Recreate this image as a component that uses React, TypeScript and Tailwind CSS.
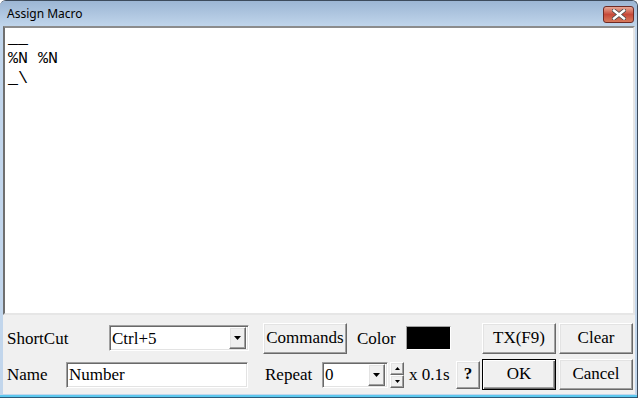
import React from "react";

const serif = "font-['Liberation_Serif','Times_New_Roman',serif]";
const raised =
  "bg-[#f0f0f0] border border-t-white border-l-white border-b-[#696969] border-r-[#696969] shadow-[inset_-1px_-1px_0_#a0a0a0,inset_1px_1px_0_#e3e3e3]";
const sunken =
  "bg-white border border-t-[#a0a0a0] border-l-[#a0a0a0] border-b-white border-r-white shadow-[inset_1px_1px_0_#696969,inset_-1px_-1px_0_#e3e3e3]";

function DownArrow() {
  return (
    <svg width="7" height="4" viewBox="0 0 7 4">
      <polygon points="0,0 7,0 3.5,4" fill="#000" />
    </svg>
  );
}

function DropBtn() {
  return (
    <div className={`${raised} w-[17px] h-[22px] shrink-0 flex items-center justify-center`}>
      <DownArrow />
    </div>
  );
}

function Combo({ w, text }: { w: string; text: string }) {
  return (
    <div className={`${sunken} ${w} h-[26px] shrink-0 flex items-center justify-between pl-[2px] pr-[2px]`}>
      <span className="text-[17px] leading-none text-black">{text}</span>
      <DropBtn />
    </div>
  );
}

function Button({ w, h, children, def }: { w: string; h: string; children: React.ReactNode; def?: boolean }) {
  const cls = def
    ? "bg-[#f0f0f0] border border-black shadow-[inset_1px_1px_0_#fff,inset_-1px_-1px_0_#696969,inset_-2px_-2px_0_#a0a0a0]"
    : raised;
  return (
    <div className={`${cls} ${w} ${h} shrink-0 flex items-center justify-center pb-[2px] text-[17px] leading-none text-black`}>
      {children}
    </div>
  );
}

export default function App() {
  return (
    <div className="w-[638px] h-[398px] bg-[#c2d6ec] flex flex-col border-t border-r border-[#3d4b5c] rounded-tr-[6px] rounded-tl-[6px] overflow-hidden">
      {/* title bar */}
      <div className="h-[25px] bg-gradient-to-b from-[#9cb6d4] to-[#c0d5eb] flex items-center justify-between pl-[7px] pr-[3px]">
        <span className="font-['Noto_Sans','Open_Sans',sans-serif] text-[12px] text-black leading-none">Assign Macro</span>
        <div className="w-[31px] h-[17px] mt-[1px] rounded-[3px] border border-[#6e2b25] bg-gradient-to-b from-[#e6a796] via-[#c6493a] to-[#d77a5c] flex items-center justify-center">
          <svg width="14" height="11" viewBox="0 0 14 11">
            <path d="M2 1.5 L12 9.5 M12 1.5 L2 9.5" stroke="#4a4a4a" strokeWidth="4" strokeLinecap="square" />
            <path d="M2 1.5 L12 9.5 M12 1.5 L2 9.5" stroke="#fff" strokeWidth="2.4" strokeLinecap="square" />
          </svg>
        </div>
      </div>
      {/* client */}
      <div className="flex-1 flex flex-col pl-[3px] pr-[2px]">
        <div className="h-[289px] bg-white border-2 border-t-[#8c8c8c] border-l-[#6f6f6f] border-b-[#e6e6e6] border-r-[#e6e6e6] pl-[3px] pt-[1px]">
          <pre className="font-['Liberation_Mono','Courier_New',monospace] text-[16.67px] leading-[20px] text-black m-0">
{"__\n%N %N\n_\\"}
          </pre>
        </div>
        <div className={`h-[79px] bg-[#f0f0f0] ${serif} text-black pt-[7px] flex flex-col gap-[5px]`}>
          {/* row 1 */}
          <div className="h-[32px] flex items-center pl-[4px] [&>*]:shrink-0">
            <span className="w-[102px] text-[17px] leading-none">ShortCut</span>
            <Combo w="w-[140px]" text="Ctrl+5" />
            <div className="w-[14px]" />
            <Button w="w-[84px]" h="h-[31px]">Commands</Button>
            <span className="w-[59px] pl-[10px] text-[17px] leading-none">Color</span>
            <div className="w-[45px] h-[24px] bg-black border border-t-[#a0a0a0] border-l-[#a0a0a0] border-b-white border-r-white" />
            <div className="w-[31px]" />
            <Button w="w-[74px]" h="h-[31px]">TX(F9)</Button>
            <div className="w-[3px]" />
            <Button w="w-[74px]" h="h-[31px]">Clear</Button>
          </div>
          {/* row 2 */}
          <div className="h-[31px] flex items-center pl-[4px] [&>*]:shrink-0">
            <span className="w-[59px] text-[17px] leading-none">Name</span>
            <div className={`${sunken} w-[182px] h-[26px] flex items-center pl-[2px]`}>
              <span className="text-[17px] leading-none">Number</span>
            </div>
            <div className="w-[17px]" />
            <span className="w-[57px] text-[17px] leading-none">Repeat</span>
            <Combo w="w-[66px]" text="0" />
            <div className="ml-[2px] w-[14px] h-[26px] flex flex-col">
              <div className={`${raised} h-[13px] flex items-center justify-center`}>
                <svg width="5" height="3" viewBox="0 0 5 3"><polygon points="0,3 5,3 2.5,0" fill="#000" /></svg>
              </div>
              <div className={`${raised} h-[13px] flex items-center justify-center`}>
                <svg width="5" height="3" viewBox="0 0 5 3"><polygon points="0,0 5,0 2.5,3" fill="#000" /></svg>
              </div>
            </div>
            <span className="w-[52px] pl-[5px] text-[17px] leading-none whitespace-nowrap">x 0.1s</span>
            <Button w="w-[24px]" h="h-[28px]"><span className="font-bold">?</span></Button>
            <div className="w-[2px]" />
            <Button w="w-[74px]" h="h-[31px]" def>OK</Button>
            <div className="w-[3px]" />
            <Button w="w-[74px]" h="h-[31px]">Cancel</Button>
          </div>
        </div>
        <div className="flex-1" />
      </div>
      <div className="h-[2px] bg-[#5cc8ee]" />
      <div className="h-[1px] bg-[#2a5a7a]" />
    </div>
  );
}
